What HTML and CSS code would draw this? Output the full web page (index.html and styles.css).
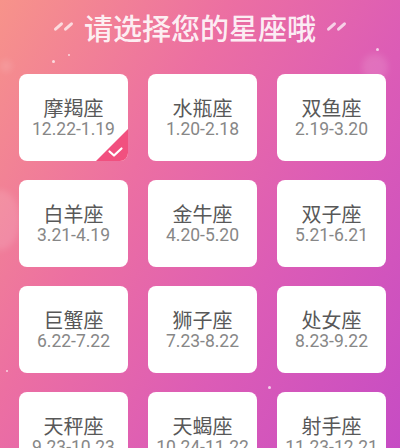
FILE: index.html
```html
<!DOCTYPE html>
<html lang="zh">
<head>
<meta charset="utf-8">
<link rel="stylesheet" href="styles.css">
</head>
<body>
<div class="page">
  <span class="dot d1"></span><span class="dot d2"></span><span class="dot d3"></span><span class="dot d4"></span><span class="dot d5"></span>
  <span class="glow g1"></span><span class="glow g2"></span><span class="glow g3"></span>
  <header class="header">
    <span class="slashes"><i></i><i></i></span>
    <h1 class="title">请选择您的星座哦</h1>
    <span class="slashes"><i></i><i></i></span>
  </header>
  <main class="grid">
    <div class="card selected"><div class="name">摩羯座</div><div class="date">12.22-1.19</div>
      <div class="tick"><svg viewBox="0 0 32 32" width="32" height="32"><path d="M13.5 22.5 L18 26.5 L25.5 19.5" fill="none" stroke="#fff" stroke-width="2.2" stroke-linecap="round" stroke-linejoin="round"/></svg></div>
    </div>
    <div class="card"><div class="name">水瓶座</div><div class="date">1.20-2.18</div></div>
    <div class="card"><div class="name">双鱼座</div><div class="date">2.19-3.20</div></div>
    <div class="card"><div class="name">白羊座</div><div class="date">3.21-4.19</div></div>
    <div class="card"><div class="name">金牛座</div><div class="date">4.20-5.20</div></div>
    <div class="card"><div class="name">双子座</div><div class="date">5.21-6.21</div></div>
    <div class="card"><div class="name">巨蟹座</div><div class="date">6.22-7.22</div></div>
    <div class="card"><div class="name">狮子座</div><div class="date">7.23-8.22</div></div>
    <div class="card"><div class="name">处女座</div><div class="date">8.23-9.22</div></div>
    <div class="card"><div class="name">天秤座</div><div class="date">9.23-10.23</div></div>
    <div class="card"><div class="name">天蝎座</div><div class="date">10.24-11.22</div></div>
    <div class="card"><div class="name">射手座</div><div class="date">11.23-12.21</div></div>
  </main>
</div>
</body>
</html>
```

FILE: styles.css
```css
html, body {
  margin: 0;
  padding: 0;
}
body {
  width: 400px;
  height: 448px;
  overflow: hidden;
}
.page {
  position: relative;
  width: 400px;
  height: 448px;
  overflow: hidden;
  background: linear-gradient(120deg, #f7938a 0%, #ec6fa2 35%, #dc5cb6 65%, #c64cc4 100%);
  font-family: "Noto Sans", "Noto Sans CJK SC", sans-serif;
}
.header {
  height: 74px;
  display: flex;
  align-items: flex-start;
  justify-content: center;
  gap: 14px;
}
.title {
  margin: 0;
  padding-top: 7px;
  font-family: "Noto Sans CJK SC", sans-serif;
  font-size: 29px;
  line-height: 40px;
  font-weight: 500;
  color: rgba(255, 255, 255, 0.9);
}
.slashes {
  display: flex;
  gap: 7px;
  padding-top: 21px;
}
.slashes i {
  display: block;
  width: 3px;
  height: 11px;
  border-radius: 2px;
  background: rgba(255, 255, 255, 0.7);
  transform: rotate(48deg);
}
.grid {
  position: relative;
  display: grid;
  grid-template-columns: repeat(3, 109px);
  grid-auto-rows: 87px;
  column-gap: 20px;
  row-gap: 19px;
  padding-left: 19px;
}
.card {
  position: relative;
  background: #fff;
  border-radius: 8px;
  overflow: hidden;
  display: flex;
  flex-direction: column;
  align-items: center;
  padding-top: 23px;
  box-sizing: border-box;
}
.name {
  font-family: "Noto Sans CJK SC", sans-serif;
  font-size: 20px;
  line-height: 22px;
  color: #585858;
}
.date {
  font-family: Roboto, "Noto Sans", sans-serif;
  font-size: 17.5px;
  line-height: 20px;
  color: #878787;
}
.tick {
  position: absolute;
  right: 0;
  bottom: 0;
  width: 32px;
  height: 32px;
  background: #f1507f;
  clip-path: polygon(100% 0, 100% 100%, 0 100%);
}
.tick svg {
  display: block;
}
.dot {
  position: absolute;
  width: 3px;
  height: 3px;
  border-radius: 50%;
  background: rgba(255, 255, 255, 0.7);
}
.d1 { left: 52px; top: 60px; }
.d2 { left: 376px; top: 48px; }
.d3 { left: 68px; top: 54px; width: 2px; height: 2px; }
.d4 { left: 268px; top: 386px; }
.d5 { left: 6px; top: 370px; width: 2px; height: 2px; }
.glow {
  position: absolute;
  border-radius: 50%;
  background: rgba(255, 255, 255, 0.12);
  filter: blur(3px);
}
.g1 { left: 362px; top: 54px; width: 26px; height: 26px; }
.g2 { left: -20px; top: 190px; width: 40px; height: 60px; }
.g3 { left: 0px; top: 60px; width: 12px; height: 12px; }
```
